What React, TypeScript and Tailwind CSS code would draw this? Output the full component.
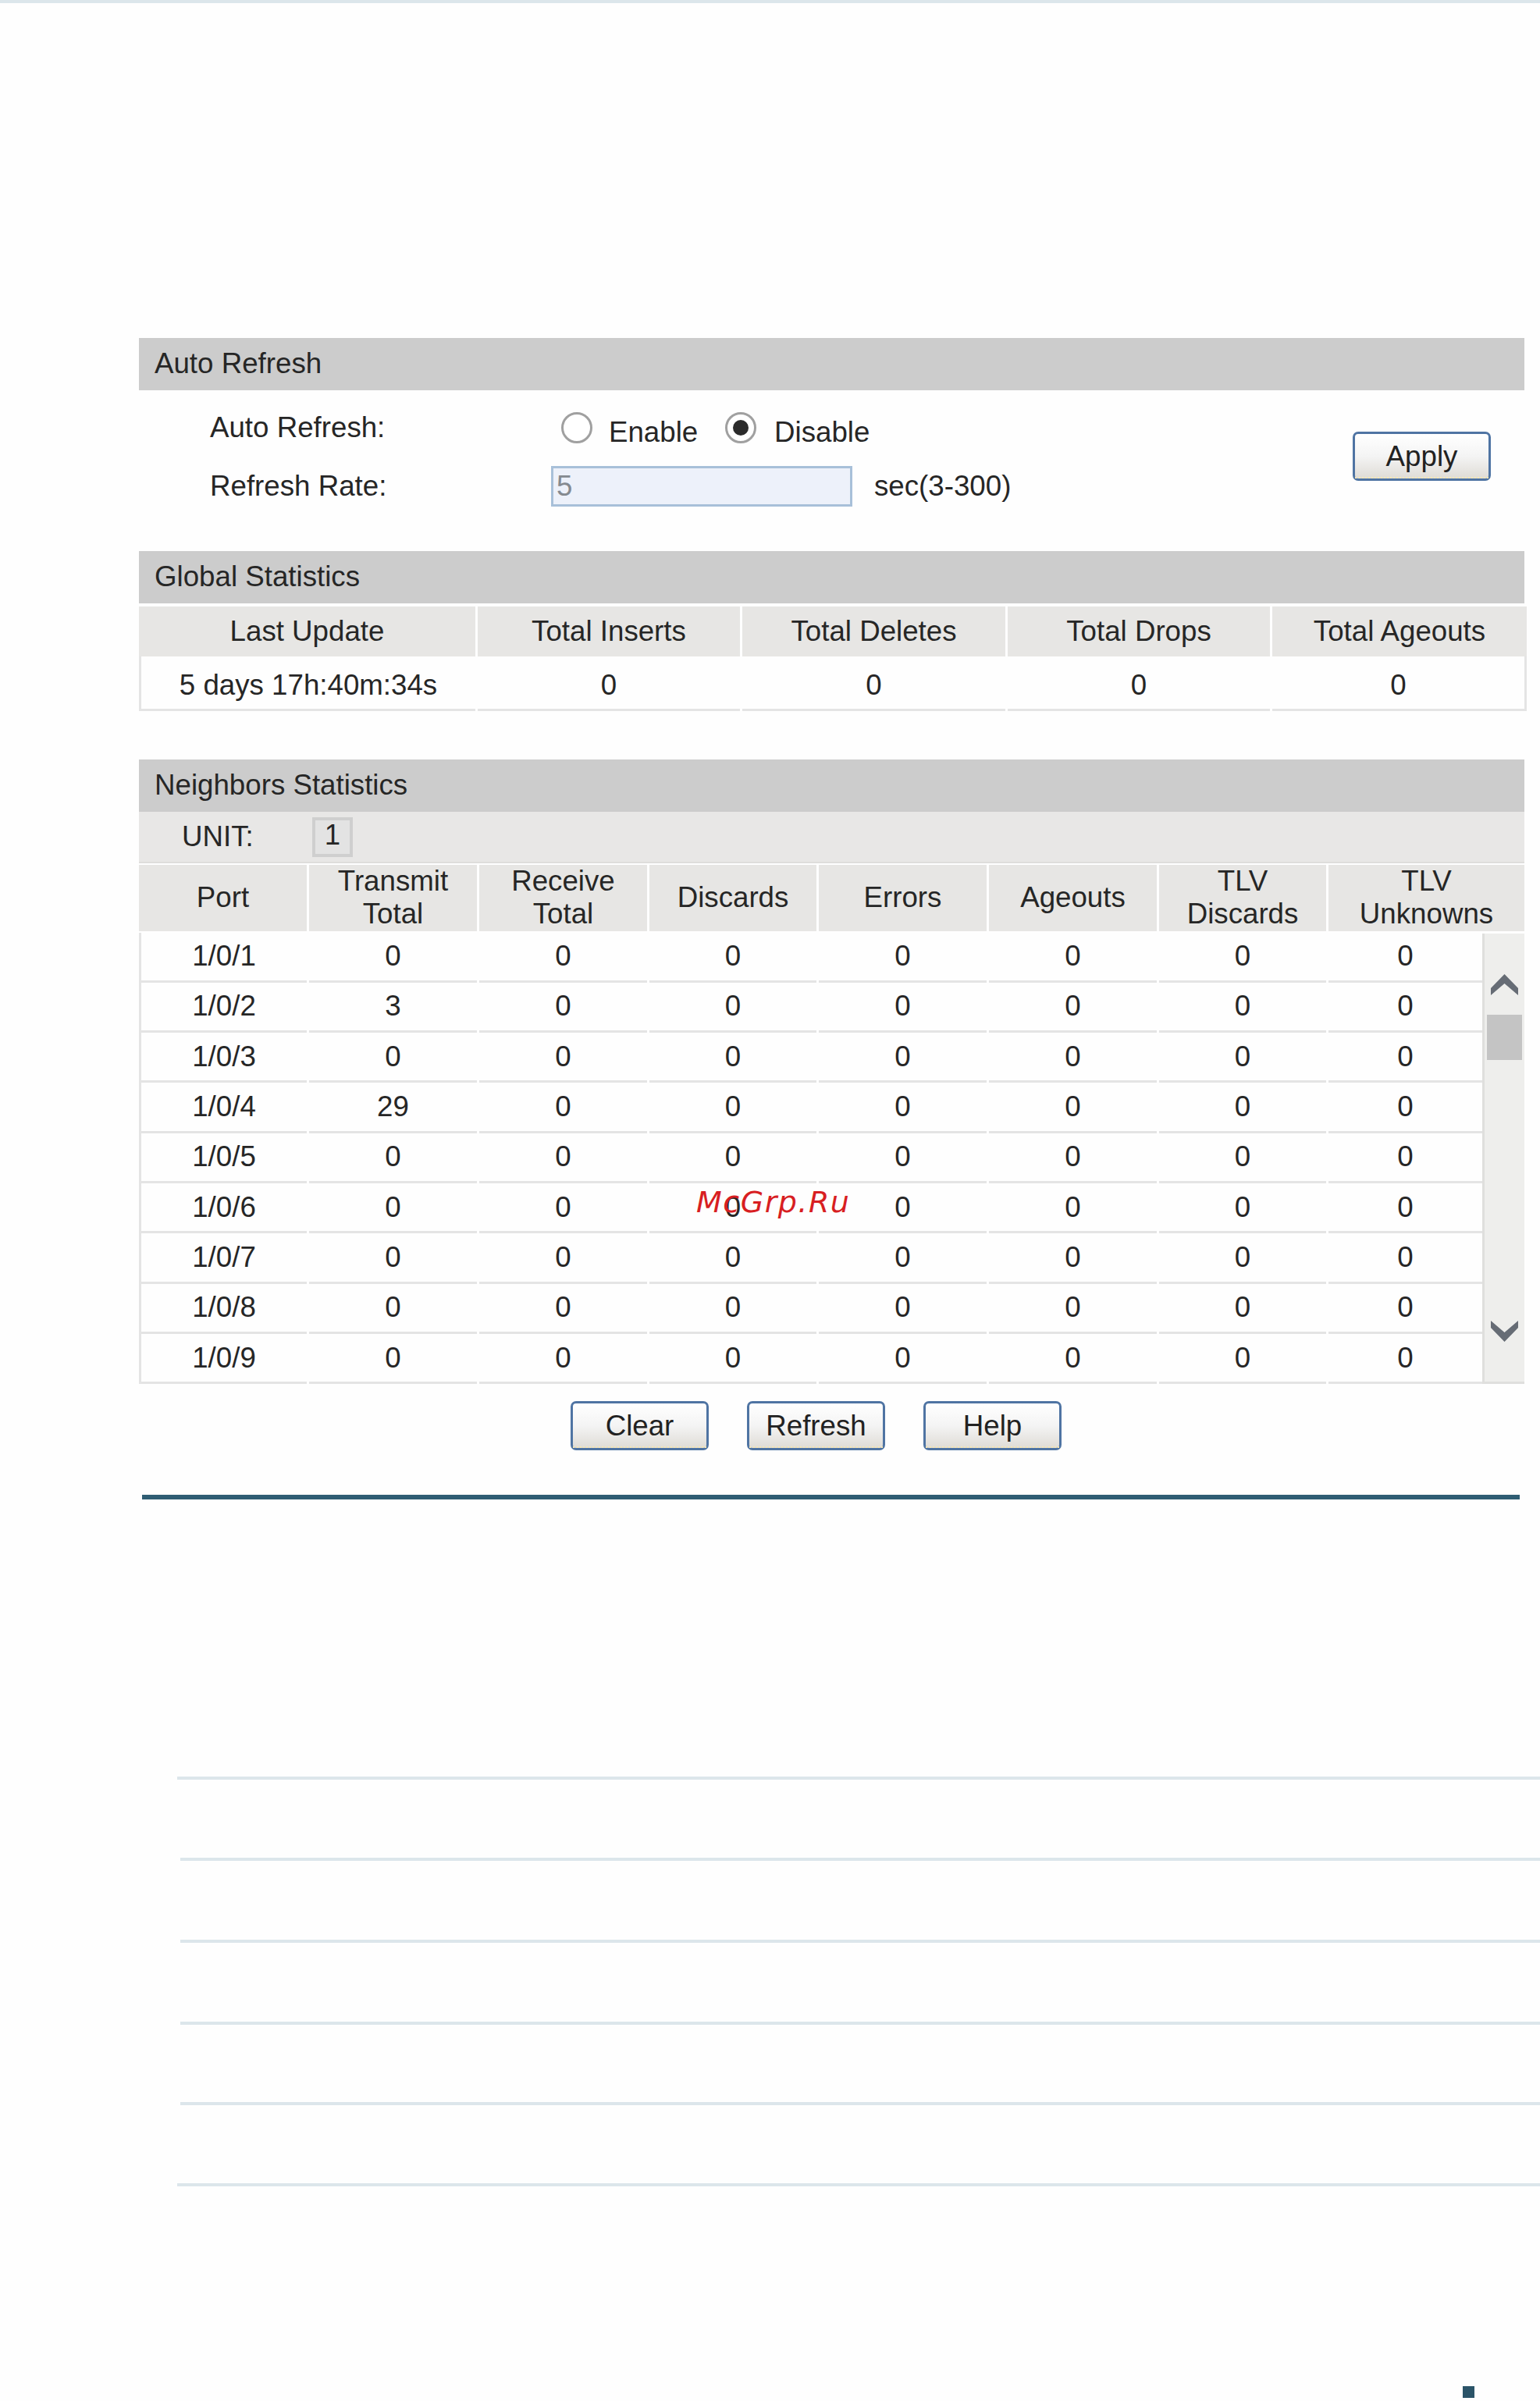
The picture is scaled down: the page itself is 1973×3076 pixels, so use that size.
const font = { fontFamily: '"Liberation Sans", Arial, sans-serif' };

const neighborCols = ['1/0/1', '1/0/2', '1/0/3', '1/0/4', '1/0/5', '1/0/6', '1/0/7', '1/0/8', '1/0/9'];
const txCounts: Record<string, string> = { '1/0/2': '3', '1/0/4': '29' };
const lowerRules = [
  { ml: 'ml-[227px]', mt: 'mt-[355px]' },
  { ml: 'ml-[231px]', mt: 'mt-[100px]' },
  { ml: 'ml-[231px]', mt: 'mt-[101px]' },
  { ml: 'ml-[231px]', mt: 'mt-[101px]' },
  { ml: 'ml-[231px]', mt: 'mt-[99px]' },
  { ml: 'ml-[227px]', mt: 'mt-[100px]' },
];

function Bar({ title }: { title: string }) {
  return <div className="flex h-[67px] items-center bg-[#cccccc] pb-[2px] pl-[20px] text-[#262626]">{title}</div>;
}

function Btn({ label }: { label: string }) {
  return (
    <button className="h-[63px] w-[177px] rounded-[7px] border-[3px] border-[#4f74a3] bg-gradient-to-b from-white via-[#f4f4f4] to-[#dfdcd6] text-[#222222]">
      <span className="flex h-[56px] items-center justify-center border-b-[2px] border-dotted border-[#f6e7b4] pt-[2px]">{label}</span>
    </button>
  );
}

function Radio({ checked }: { checked?: boolean }) {
  return (
    <span className="flex h-[40px] w-[40px] items-center justify-center rounded-full border-[3px] border-[#a0a0a0] bg-white">
      {checked && <span className="h-[20px] w-[20px] rounded-full bg-[#2b2b2b]" />}
    </span>
  );
}

function Chevron({ down }: { down?: boolean }) {
  return (
    <svg width="35" height="27" viewBox="0 0 35 27" className={down ? 'rotate-180' : ''}>
      <path d="M0 18 L17.5 0 L35 18 L35 27 L17.5 12 L0 27 Z" fill="#666c75" />
    </svg>
  );
}

export default function App() {
  return (
    <div className="relative h-[3076px] w-[1973px] overflow-hidden bg-[#fefefe] text-[36.7px] leading-[42px] text-[#262626]" style={font}>
      <div className="h-[4px] bg-[#dce6eb]" />

      <div className="ml-[178px] mt-[429px] w-[1775px]">
        {/* auto refresh */}
        <Bar title="Auto Refresh" />
        <div className="flex h-[206px] justify-between">
          <div className="pl-[91px] pt-[10px]">
            <div className="flex h-[75px] items-center">
              <span className="w-[437px]">Auto Refresh:</span>
              <div className="ml-[13px] flex w-[210px] items-center">
                <Radio />
                <span className="ml-[21px] mt-[13px]">Enable</span>
              </div>
              <div className="flex items-center">
                <Radio checked />
                <span className="ml-[23px] mt-[13px]">Disable</span>
              </div>
            </div>
            <div className="flex h-[75px] items-center">
              <span className="w-[437px]">Refresh Rate:</span>
              <div className="flex h-[52px] w-[386px] items-center border-[3px] border-[#a8c0d9] bg-[#edf1fa] pl-[4px] text-[#858a90]">5</div>
              <span className="ml-[28px]">sec(3-300)</span>
            </div>
          </div>
          <div className="mr-[43px] mt-[53px]">
            <Btn label="Apply" />
          </div>
        </div>

        {/* global statistics */}
        <Bar title="Global Statistics" />
        <div className="mt-[4px] grid grid-cols-[431px_336px_337px_336px_326px] gap-x-[3px] text-center">
          {['Last Update', 'Total Inserts', 'Total Deletes', 'Total Drops', 'Total Ageouts'].map((h) => (
            <div key={h} className="flex h-[64px] items-center justify-center bg-[#e7e6e4]">{h}</div>
          ))}
          {['5 days 17h:40m:34s', '0', '0', '0', '0'].map((v, i) => (
            <div
              key={i}
              className={`flex h-[70px] items-center justify-center border-b-[3px] border-[#e4e4e4] pt-[6px] ${i === 0 ? 'border-l-[3px]' : ''} ${i === 4 ? 'border-r-[3px]' : ''}`}
            >
              {v}
            </div>
          ))}
        </div>

        {/* neighbors statistics */}
        <div className="mt-[62px]">
          <Bar title="Neighbors Statistics" />
        </div>
        <div className="flex h-[66px] items-center border-b-[2px] border-[#dedddb] bg-[#e8e7e6]">
          <span className="ml-[55px] w-[167px]">UNIT:</span>
          <span className="flex h-[51px] w-[52px] items-center justify-center border-[4px] border-[#cfcfcf] bg-[#e3e3e3] pb-[4px]">1</span>
        </div>
        <div className="mt-[2px] grid grid-cols-[215px_215px_215px_214px_215px_215px_214px_251px] gap-x-[3px] text-center">
          {[['Port'], ['Transmit', 'Total'], ['Receive', 'Total'], ['Discards'], ['Errors'], ['Ageouts'], ['TLV', 'Discards'], ['TLV', 'Unknowns']].map((h) => (
            <div key={h.join()} className="flex h-[85px] flex-col items-center justify-center bg-[#e7e6e4] pb-[2px]">
              {h.map((line) => <span key={line}>{line}</span>)}
            </div>
          ))}
        </div>
        <div className="flex">
          <div className="w-[1721px] pt-[1.5px]">
            {neighborCols.map((port) => (
              <div key={port} className="grid h-[64.33px] grid-cols-[215px_215px_215px_214px_215px_215px_214px_197px] gap-x-[3px] text-center">
                {[port, txCounts[port] ?? '0', '0', '0', '0', '0', '0', '0'].map((v, i) => (
                  <div key={i} className={`flex items-center justify-center border-b-[3px] border-[#e4e4e4] ${i === 0 ? 'border-l-[3px]' : ''}`}>{v}</div>
                ))}
              </div>
            ))}
          </div>
          <div className="mt-[3px] flex w-[54px] flex-col items-center border-b-[3px] border-l-[3px] border-[#dfdfdd] bg-[#eeeeec] pb-[51px] pt-[52px]">
            <Chevron />
            <div className="mt-[25px] h-[58px] w-[45px] bg-[#c4c4c4]" />
            <div className="flex-1" />
            <Chevron down />
          </div>
        </div>

        <div className="mt-[22px] flex gap-x-[49px] pl-[553px]">
          <Btn label="Clear" />
          <Btn label="Refresh" />
          <Btn label="Help" />
        </div>
        <div className="ml-[4px] mt-[57px] h-[6px] w-[1765px] bg-[#2f5d73]" />
      </div>

      {lowerRules.map((r, i) => (
        <div key={i} className={`h-[4px] bg-[#dce6eb] ${r.ml} ${r.mt}`} />
      ))}
      <div className="ml-[1874px] mt-[256px] h-[15px] w-[15px] bg-[#2b5468]" />

      {/* watermark */}
      <span
        className="absolute left-[892px] top-[1519px] text-[38px] italic tracking-[1.5px] text-[#d81e22]"
        style={{ fontFamily: '"DejaVu Sans", sans-serif' }}
      >
        McGrp.Ru
      </span>
    </div>
  );
}
